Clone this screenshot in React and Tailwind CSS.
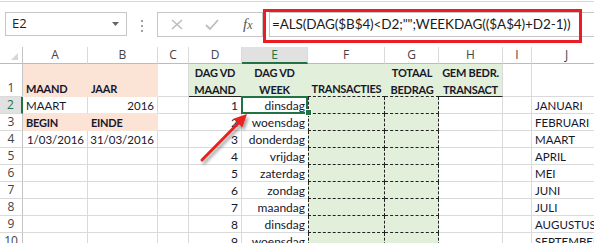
const days = ['dinsdag', 'woensdag', 'donderdag', 'vrijdag', 'zaterdag', 'zondag', 'maandag', 'dinsdag', 'woensdag'];
const months = ['JANUARI', 'FEBRUARI', 'MAART', 'APRIL', 'MEI', 'JUNI', 'JULI', 'AUGUSTUS', 'SEPTEMBER'];
const letters = ['A', 'B', 'C', 'D', 'E', 'F', 'G', 'H', 'I', 'J'];

// gridline / fill presets
const grid = 'border-r border-b border-[#dadada]';
const peach = 'bg-[#fbe3d6] border-r border-b border-[#fbe3d6]';
const green = 'bg-[#e2efda]';
const bold = 'font-bold text-[11px] tracking-[-0.25px]';

function Cell({ className = '', children }) {
  return (
    <div className={`flex items-end whitespace-nowrap px-[3px] leading-[14px] ${className}`}>
      {children}
    </div>
  );
}

function RowHead({ n, active }) {
  return (
    <div
      className={`flex items-end justify-center border-b border-b-[#dadada] pb-[1px] font-['Open_Sans',sans-serif] text-[12px] leading-[14px] ${
        active
          ? 'bg-[#e1e1e1] text-[#217346] border-r-2 border-r-[#217346]'
          : 'text-[#444] border-r border-r-[#c4c4c4]'
      }`}
    >
      {n}
    </div>
  );
}

function FormulaBar() {
  return (
    <div className="h-[47px] flex flex-col">
      <div className="h-[1px] bg-white" />
      <div className="h-[1px] bg-[#d8d8d8]" />
      <div className="flex items-start pt-[10px]">
        <div className="ml-[5px] w-[122px] h-[24px] border border-[#c6c6c6] flex items-center justify-between pl-[6px] pr-[7px] font-['Open_Sans',sans-serif] text-[13px] text-[#222]">
          <span>E2</span>
          <svg width="7" height="4" viewBox="0 0 7 4">
            <path d="M0 0h7L3.5 4z" fill="#666" />
          </svg>
        </div>
        <div className="ml-[14px] mt-[8px] flex flex-col gap-[3px]">
          <div className="w-[2px] h-[2px] bg-[#a0a0a0]" />
          <div className="w-[2px] h-[2px] bg-[#a0a0a0]" />
          <div className="w-[2px] h-[2px] bg-[#a0a0a0]" />
        </div>
        <div className="ml-[14px] w-[106px] h-[25px] border border-[#c6c6c6] flex items-center">
          <svg className="ml-[13px]" width="12" height="11" viewBox="0 0 12 11">
            <path d="M1 1l10 9M11 1L1 10" stroke="#bdbdbd" strokeWidth="1.6" />
          </svg>
          <svg className="ml-[22px]" width="14" height="11" viewBox="0 0 14 11">
            <path d="M1 6l4 4L13 1" stroke="#bdbdbd" strokeWidth="1.8" fill="none" />
          </svg>
          <span className="ml-[24px] font-['Liberation_Serif',serif] italic text-[15px] text-[#555] leading-none">
            f<span className="text-[12px]">x</span>
          </span>
        </div>
        <div className="ml-[6px] flex-1 h-[25px] border-l border-t border-b border-[#c6c6c6] flex items-center pl-[2px] font-['Lato',sans-serif] text-[13.5px] tracking-[-0.1px] text-[#1b1b1b] whitespace-nowrap">
          {'=ALS(DAG($B$4)<D2;"";WEEKDAG(($A$4)+D2-1))'}
        </div>
      </div>
    </div>
  );
}

function Arrow() {
  return (
    <svg className="absolute left-0 top-0 pointer-events-none z-20" width="594" height="243">
      <defs>
        <filter id="sh" x="-20%" y="-20%" width="140%" height="140%">
          <feDropShadow dx="2" dy="3" stdDeviation="1.5" floodColor="#000" floodOpacity="0.35" />
        </filter>
      </defs>
      <g filter="url(#sh)">
        <line x1="202" y1="160" x2="238" y2="123.5" stroke="#e8201f" strokeWidth="3" strokeLinecap="round" />
        <path d="M247 114L242.4 127.6L233.4 118.8Z" fill="#e8201f" />
      </g>
    </svg>
  );
}

export default function App() {
  return (
    <div className="relative w-[594px] h-[243px] overflow-hidden bg-white font-['Lato',sans-serif] text-[12px] text-[#17172b]">
      <FormulaBar />

      <div className="grid grid-cols-[23px_65px_70px_31px_53px_66px_77px_54px_64px_29px_70px] grid-rows-[17px_33px_repeat(9,17px)]">
        {/* column headers */}
        <div className="relative border-r border-b border-r-[#c4c4c4] border-b-[#bcbcbc]">
          <div className="absolute right-[4px] bottom-[3px] w-0 h-0 border-l-[7px] border-l-transparent border-b-[7px] border-b-[#d6d6d6]" />
        </div>
        {letters.map((l) =>
          l === 'E' ? (
            <div
              key={l}
              className="flex items-center justify-center bg-[#e1e1e1] border-r border-r-[#dadada] border-b-2 border-b-[#217346] text-[#217346] font-['Open_Sans',sans-serif] text-[12px]"
            >
              {l}
            </div>
          ) : (
            <div
              key={l}
              className="flex items-center justify-center border-r border-b border-r-[#dadada] border-b-[#bcbcbc] text-[#444] font-['Open_Sans',sans-serif] text-[12px]"
            >
              {l}
            </div>
          )
        )}

        {/* row 1 */}
        <RowHead n={1} />
        <Cell className={`${peach} ${bold}`}>MAAND</Cell>
        <Cell className={`${peach} ${bold}`}>JAAR</Cell>
        <Cell className={grid} />
        <Cell className={`${green} flex-col !items-center justify-end border-r border-r-[#e2efda] border-b border-b-[#222] ${bold} leading-[17px]`}>
          <span>DAG VD</span>
          <span className="-mb-[2px]">MAAND</span>
        </Cell>
        <Cell className={`${green} flex-col !items-center justify-end border-r border-r-[#e2efda] border-b border-b-[#e2efda] ${bold} leading-[17px]`}>
          <span>DAG VD</span>
          <span className="-mb-[2px]">WEEK</span>
        </Cell>
        <Cell className={`${green} justify-center border-b border-dashed border-b-[#222] ${bold}`}>
          TRANSACTIES
        </Cell>
        <Cell className={`${green} flex-col !items-center justify-end border-b border-dashed border-b-[#222] ${bold} leading-[17px]`}>
          <span>TOTAAL</span>
          <span className="-mb-[2px]">BEDRAG</span>
        </Cell>
        <Cell className={`${green} flex-col !items-center justify-end border-r border-r-[#dadada] border-b border-b-[#222] ${bold} leading-[17px]`}>
          <span>GEM BEDR.</span>
          <span className="-mb-[2px]">TRANSACT</span>
        </Cell>
        <Cell className={grid} />
        <Cell className={grid} />

        {/* rows 2 - 10 */}
        {days.map((day, i) => {
          const row = i + 2;
          return [
            <RowHead key={`h${row}`} n={row} active={row === 2} />,

            row === 2 ? (
              <Cell key={`a${row}`} className="border-r border-r-[#dadada] border-b border-b-[#fbe3d6] text-[11.5px]">MAART</Cell>
            ) : row === 3 ? (
              <Cell key={`a${row}`} className={`${peach} ${bold}`}>BEGIN</Cell>
            ) : row === 4 ? (
              <Cell key={`a${row}`} className={`${grid} justify-end text-[11.5px]`}>1/03/2016</Cell>
            ) : (
              <Cell key={`a${row}`} className={grid} />
            ),

            row === 2 ? (
              <Cell key={`b${row}`} className="border-r border-r-[#dadada] border-b border-b-[#fbe3d6] justify-end text-[11.5px]">2016</Cell>
            ) : row === 3 ? (
              <Cell key={`b${row}`} className={`${peach} ${bold}`}>EINDE</Cell>
            ) : row === 4 ? (
              <Cell key={`b${row}`} className={`${grid} justify-end text-[11.5px]`}>31/03/2016</Cell>
            ) : (
              <Cell key={`b${row}`} className={grid} />
            ),

            <Cell key={`c${row}`} className={grid} />,
            <Cell key={`d${row}`} className={`${grid} justify-end`}>{i + 1}</Cell>,

            row === 2 ? (
              <Cell key={`e${row}`} className="relative z-10 justify-end border-b border-b-[#dadada]">
                {day}
                <div className="absolute -left-[1px] -top-[1px] w-[67px] h-[18px] border-2 border-[#217346]" />
                <div className="absolute -right-[4px] -bottom-[3px] w-[7px] h-[7px] bg-[#217346] border border-white" />
              </Cell>
            ) : (
              <Cell key={`e${row}`} className="justify-end border-b border-b-[#dadada]">{day}</Cell>
            ),

            <Cell key={`f${row}`} className={`${green} border-l border-r border-b border-dashed border-[#222]`} />,
            <Cell key={`g${row}`} className={`${green} border-r border-b border-dashed border-[#222]`} />,
            <Cell key={`h${row}`} className={grid} />,
            <Cell key={`i${row}`} className={grid} />,
            <Cell key={`j${row}`} className={`${grid} text-[11.5px]`}>{months[i]}</Cell>,
          ];
        })}
      </div>

      {/* annotations */}
      <div className="absolute left-[263px] top-[9px] w-[319px] h-[34px] border-[3px] border-[#ec1c24] z-20 pointer-events-none" />
      <Arrow />
    </div>
  );
}
